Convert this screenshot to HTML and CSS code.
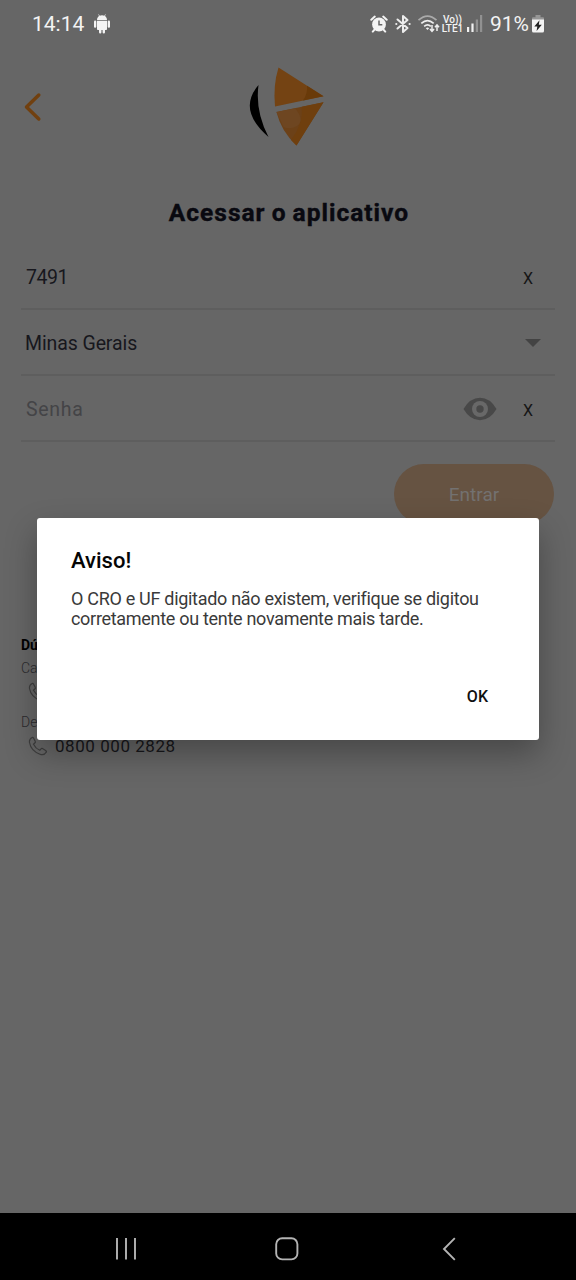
FILE: index.html
```html
<!DOCTYPE html>
<html lang="pt-BR">
<head>
<meta charset="utf-8">
<title>Acessar o aplicativo</title>
<link rel="stylesheet" href="styles.css">
</head>
<body>
<div class="screen">
  <header class="status">
    <span class="clock">14:14</span>
    <svg class="android" width="18" height="20" viewBox="0 0 18 20" fill="#f4f4f4"><path d="M4 6.2C4 3.8 5.2 2.6 6.1 2L5.2.5l.5-.3 1 1.5a6 6 0 0 1 4.6 0l1-1.5.5.3L11.900 2C12.800 2.600 14 3.800 14 6.200z"/><path d="M4 7h10v8.200c0 .5-.3.8-.8.8H12v2.200a1.200 1.200 0 0 1-2.400 0V16H8.400v2.200a1.200 1.200 0 0 1-2.400 0V16H4.800c-.5 0-.8-.3-.8-.8z"/><rect x="1" y="6.600" width="2.300" height="7.200" rx="1.100"/><rect x="14.700" y="6.600" width="2.300" height="7.200" rx="1.100"/></svg>
    <svg class="alarm" width="18" height="18" viewBox="0 0 18 18"><circle cx="9" cy="9.500" r="6.900" fill="#f4f4f4"/><path d="M1.300 4.800 4.800 1.600M16.700 4.800l-3.500-3.200M4.500 14.600l-1.700 2M13.500 14.600l1.700 2" stroke="#f4f4f4" stroke-width="2" stroke-linecap="round"/><path d="M9 5.500v4.300h3.300" fill="none" stroke="#666" stroke-width="1.500"/></svg>
    <svg class="bluetooth" width="18" height="20" viewBox="0 0 18 20" fill="none" stroke="#ececec" stroke-width="2" stroke-linejoin="round" stroke-linecap="round"><path d="M3.500 5.500 13.500 14 9 18V2l4.500 4L3.500 14.500"/><path d="M2.200 10h.2M15.500 10h.2"/></svg>
    <svg class="wifi" width="24" height="20" viewBox="0 0 24 20" fill="none" stroke="#eee" stroke-width="1.700"><path d="M1.500 6.200Q10.500-2 19.500 6.200" stroke="#aaa"/><path d="M4.300 9.300Q10.500 3.800 16.700 9.300M7.200 12.300Q10.500 9.400 13.800 12.300"/><path d="M8.800 14.200 10.500 16l1.700-1.800a2.500 2.500 0 0 0-3.400 0z" fill="#eee" stroke="none"/><path d="M15 11v6M13 15l2 2.400 2-2.400M20 17v-6M18 13.200l2-2.400 2 2.400" stroke-width="1.500"/></svg>
    <span class="volte"><b>Vo))</b><b>LTE1</b></span>
    <svg class="signal" width="16" height="17" viewBox="0 0 16 17"><path d="M0 12h2.200v5H0zM4.400 8.500h2.200V17H4.400z" fill="#f1f1f1"/><path d="M8.800 4.500H11V17H8.800zM13 0h2.200v17H13z" fill="#919191"/></svg>
    <span class="percent">91%</span>
    <svg class="battery" width="12" height="18" viewBox="0 0 12 18"><path d="M3.500 0h5v2.300H11q1 0 1 1V5H0V3.300q0-1 1-1h2.500z" fill="#969696"/><path d="M0 4.500h12V16q0 1.500-1.500 1.500h-9Q0 17.500 0 16z" fill="#f4f4f4"/><path d="M7.500 5.200 2.300 11.500h3L4.600 16l5.200-6.300h-3z" fill="#222"/></svg>
  </header>

  <div class="brand">
    <svg class="back" width="20" height="30" viewBox="0 0 20 30"><path d="M16.800 3 4.500 15l12.300 12" fill="none" stroke="#71400f" stroke-width="3.500" stroke-linecap="round" stroke-linejoin="round"/></svg>
    <svg class="logo" width="80" height="84" viewBox="0 0 80 84">
      <path d="M11.500 20Q-10 45 21.500 72Q8 46 11.500 20z" fill="#000"/>
      <path d="M31.500 2.500 76.500 31.200 28 41.500Q26 20 31.500 2.500z" fill="#744313"/>
      <path d="M60 20.700 76.500 31.200 56 35.600Q61 28 60 20.700z" fill="#693a09"/>
      <path d="M29.500 47 76.500 37.200 49.500 80.500Q34 66 29.500 47z" fill="#6c4118"/>
      <path d="M76.500 37.200 49.500 80.500 44 75Q56 60 55 41.700z" fill="#6f3f0e"/>
      <path d="M29.500 47 48 43.200Q58 55 50 61 43 65 36.500 62z" fill="#6e4621"/>
    </svg>
  </div>

  <h1 class="title">Acessar o aplicativo</h1>

  <main class="form">
    <div class="field"><span class="value cro">7491</span><span class="clear">X</span></div>
    <div class="field"><span class="value uf">Minas Gerais</span><span class="caret"></span></div>
    <div class="field"><span class="value placeholder">Senha</span>
      <svg class="eye" width="34" height="24" viewBox="0 0 34 24"><path d="M.5 12Q7 .8 17 .8T33.500 12Q27 23.200 17 23.200T.5 12z" fill="#484848"/><circle cx="17" cy="12" r="8" fill="#686868"/><circle cx="17" cy="12" r="3.700" fill="#484848"/></svg>
      <span class="clear">X</span></div>
    <button class="submit">Entrar</button>
  </main>

  <section class="help">
    <b class="question">Dú</b>
    <span class="label first">Ca</span>
    <div class="phone"><svg width="20" height="20" viewBox="0 0 20 20"><path d="M4.200 1.500Q1 3 1.500 6.500 3 15 12 18.200 16 19.700 18.300 16.200 18.800 15.200 17.600 14.400L14.500 12.500Q13.600 12 13 12.900L11.800 14.300Q7.600 12.500 5.500 8.200L7 6.800Q7.700 6.200 7.200 5.300L5.500 2Q5 1.200 4.200 1.500z"/></svg></div>
    <span class="label second">De</span>
    <div class="phone"><svg width="20" height="20" viewBox="0 0 20 20"><path d="M4.200 1.500Q1 3 1.500 6.500 3 15 12 18.200 16 19.700 18.300 16.200 18.800 15.200 17.600 14.400L14.500 12.500Q13.600 12 13 12.900L11.800 14.300Q7.600 12.500 5.500 8.200L7 6.800Q7.700 6.200 7.200 5.300L5.500 2Q5 1.200 4.200 1.500z"/></svg><span class="number">0800 000 2828</span></div>
  </section>

  <nav class="navbar">
    <svg width="22" height="24" viewBox="0 0 22 24" stroke="#b4b4b4" stroke-width="1.900"><path d="M2 1v21.500M11 1v21.500M20 1v21.500"/></svg>
    <svg class="home" width="24" height="24" viewBox="0 0 24 24"><rect x="1.200" y="1.200" width="21.200" height="21.200" rx="6" fill="none" stroke="#b4b4b4" stroke-width="1.900"/></svg>
    <svg width="14" height="24" viewBox="0 0 14 24"><path d="M12.800 1.200 2 12l10.800 10.800" fill="none" stroke="#b4b4b4" stroke-width="1.900"/></svg>
  </nav>

  <div class="dialog" role="alertdialog">
    <h2 class="heading">Aviso!</h2>
    <p class="message">O CRO e UF digitado não existem, verifique se digitou<br>corretamente ou tente novamente mais tarde.</p>
    <button class="ok">OK</button>
  </div>
</div>
</body>
</html>
```
FILE: styles.css
```css
* { box-sizing: border-box; }
body { margin: 0; }
button { border: 0; background: none; padding: 0; }
svg { display: block; flex: none; }
.screen {
  position: relative;
  width: 576px;
  height: 1280px;
  display: flex;
  flex-direction: column;
  background: #666;
  overflow: hidden;
  font-family: Roboto, sans-serif;
}
.status {
  flex: none;
  height: 47px;
  padding: 0 32px;
  display: flex;
  align-items: center;
  color: #f3f3f3;
}
.clock { font-size: 21px; width: 61px; }
.alarm { margin-left: auto; }
.bluetooth { margin-left: 6px; }
.wifi { margin-left: 5px; }
.volte {
  margin-left: 1px;
  width: 21px;
  display: flex;
  flex-direction: column;
  align-items: center;
  font-size: 10px;
  line-height: 9px;
  white-space: nowrap;
}
.volte b { font-weight: 500; }
.signal { margin-left: 4px; }
.percent { font-size: 21px; margin-left: 7px; width: 42px; letter-spacing: -.1px; white-space: nowrap; }
.brand {
  flex: none;
  height: 146px;
  padding: 18px 0 0 22px;
  display: flex;
  align-items: flex-start;
}
.back { margin-top: 27px; }
.logo { margin-left: 205px; }
.title {
  flex: none;
  margin: 0;
  height: 40px;
  line-height: 40px;
  padding-left: 2px;
  text-align: center;
  font-size: 24.500px;
  font-weight: 700;
  letter-spacing: 1px;
  word-spacing: -1px;
  color: #090910;
  -webkit-text-stroke: .4px #090910;
}
.form {
  flex: none;
  height: 295px;
  margin: 11px 21px 0;
  display: flex;
  flex-direction: column;
}
.field {
  flex: none;
  height: 66px;
  display: flex;
  align-items: center;
  padding: 2px 22px 0 5px;
  border-bottom: 2px solid #5e5e5e;
}
.value { font-size: 19.500px; color: #17171d; margin-right: auto; }
.cro { letter-spacing: -.5px; }
.uf { margin-left: -1px; letter-spacing: -.1px; }
.placeholder { color: #444447; letter-spacing: .7px; }
.clear { font-size: 16px; color: #161616; padding-top: 2px; }
.caret {
  margin-right: -8px;
  border: 8px solid transparent;
  border-top-color: #434343;
  border-bottom: 0;
}
.eye { margin-right: 26px; }
.submit {
  align-self: flex-end;
  margin: 22px 1px 0 0;
  width: 160px;
  height: 60px;
  border-radius: 30px;
  background: #665342;
  color: #737170;
  font: 400 19px Roboto, sans-serif;
}
.help {
  flex: none;
  height: 220px;
  margin: 97px 21px 0;
  display: flex;
  flex-direction: column;
  color: #17171b;
}
.question { font-size: 14px; line-height: 18px; color: #000; }
.label { font-size: 14px; line-height: 18px; color: #2b2b2e; font-weight: 300; }
.first { margin-top: 5px; }
.second { margin-top: 11px; }
.phone { display: flex; align-items: center; height: 20px; margin: 5px 0 0 7px; }
.phone path { fill: none; stroke: #3e3e3e; stroke-width: 1.200; }
.number { margin-left: 7px; font-size: 17px; letter-spacing: .55px; white-space: nowrap; }
.navbar {
  flex: none;
  height: 67px;
  margin-top: auto;
  padding: 4px 120px 0 115px;
  display: flex;
  align-items: center;
  justify-content: space-between;
  background: #000;
}
.home { margin-right: 6px; }
.dialog {
  position: absolute;
  left: 37px;
  top: 518px;
  width: 502px;
  height: 222px;
  padding: 29px 34px 28px;
  display: flex;
  flex-direction: column;
  background: #fff;
  border-radius: 3px;
  box-shadow: 0 14px 32px rgba(0, 0, 0, .3);
}
.heading { margin: 0; font-size: 22px; line-height: 28px; font-weight: 500; color: #050505; }
.message { margin: 14px 0 0; font-size: 18px; line-height: 20px; letter-spacing: -.3px; color: #3a3a3a; white-space: nowrap; }
.ok { align-self: flex-end; margin: auto 17px 4px 0; font: 500 16px/22px Roboto, sans-serif; color: #101010; }
```
